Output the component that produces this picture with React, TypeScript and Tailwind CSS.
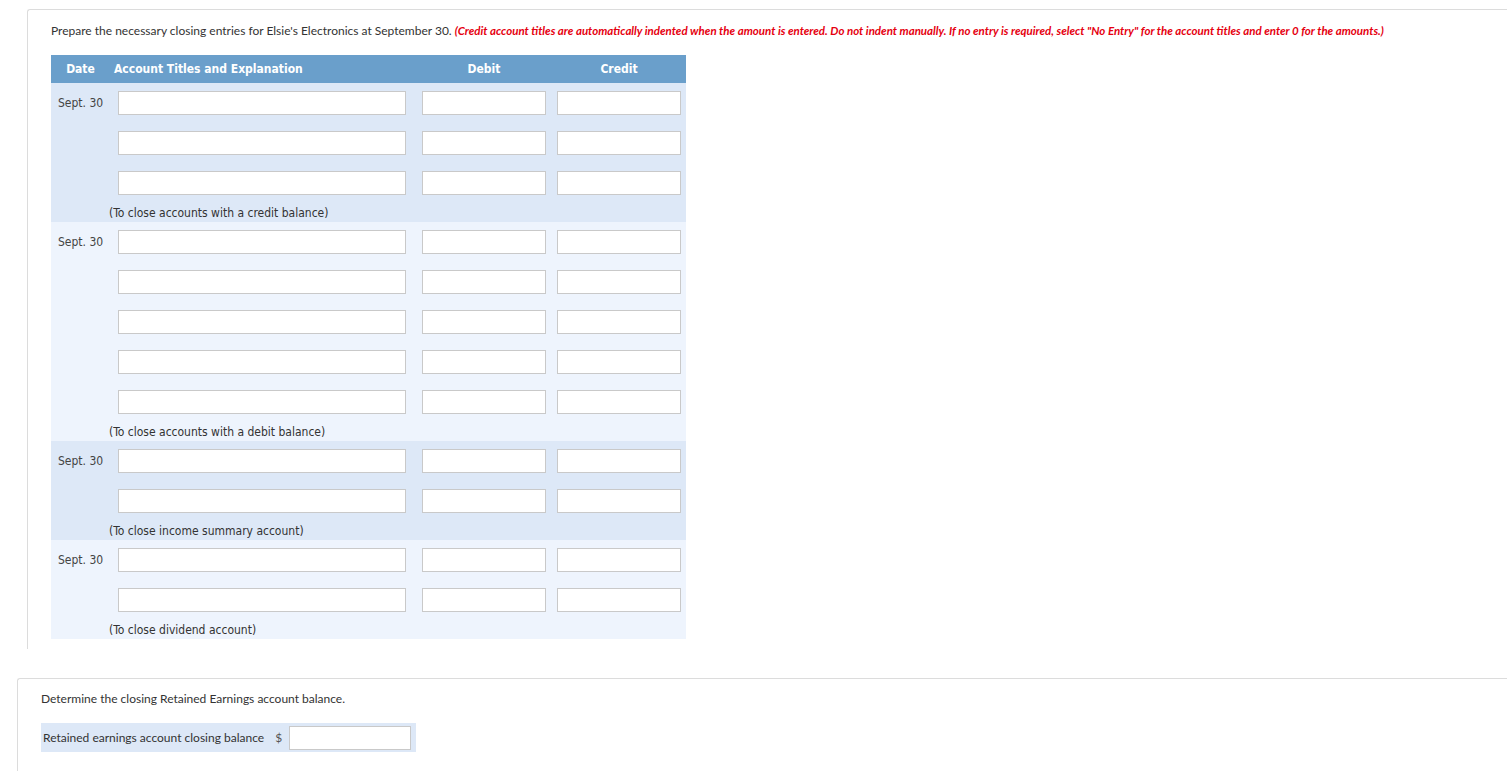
import React from 'react'

interface Entry {
  rows: number
  note: string
  tone: 'dark' | 'light'
}

const entries: Entry[] = [
  { rows: 3, note: '(To close accounts with a credit balance)', tone: 'dark' },
  { rows: 5, note: '(To close accounts with a debit balance)', tone: 'light' },
  { rows: 2, note: '(To close income summary account)', tone: 'dark' },
  { rows: 2, note: '(To close dividend account)', tone: 'light' },
]

const lato = { fontFamily: 'Lato, "Open Sans", sans-serif' }
const sans = { fontFamily: '"DejaVu Sans Condensed", "Liberation Sans", Arial, sans-serif' }

function Box({ className }: { className: string }) {
  return <div className={`shrink-0 h-6 bg-white border border-[#c9c9c9] ${className}`} />
}

function EntryBlock({ entry }: { entry: Entry }) {
  const bg = entry.tone === 'dark' ? 'bg-[#dde8f7]' : 'bg-[#eef4fd]'
  return (
    <div className={bg}>
      {Array.from({ length: entry.rows }).map((_, i) => (
        <div key={i} className="flex items-center h-10">
          <div className="shrink-0 w-[67px] pl-[7px] text-[12px] text-[#444]" style={sans}>
            {i === 0 ? 'Sept. 30' : ''}
          </div>
          <Box className="w-[288px]" />
          <Box className="w-[124px] ml-[16px]" />
          <Box className="w-[124px] ml-[11px]" />
        </div>
      ))}
      <div className="h-[19px] flex items-center pl-[58px] text-[12px] text-[#333]" style={sans}>
        {entry.note}
      </div>
    </div>
  )
}

export default function App() {
  return (
    <div className="w-[1507px] h-[771px] bg-white overflow-hidden pt-[9px]">
      <div className="ml-[27px] border-t border-l border-[#dcdcdc] rounded-tl-[3px] pl-[23px] pt-[14px] h-[640px]">
        <p className="text-[12px] text-[#333] leading-[14px] whitespace-nowrap" style={lato}>
          Prepare the necessary closing entries for Elsie's Electronics at September 30.{' '}
          <span className="text-[11.5px] text-[#e5000f] font-bold italic">
            (Credit account titles are automatically indented when the amount is entered. Do not indent manually. If no
            entry is required, select "No Entry" for the account titles and enter 0 for the amounts.)
          </span>
        </p>

        <div className="w-[635px] mt-[17px]">
          <div className="h-[28px] bg-[#6a9fcb] flex items-center text-white text-[12px] font-bold" style={sans}>
            <div className="shrink-0 w-[59px] text-center">Date</div>
            <div className="shrink-0 w-[312px] pl-[4px]">Account Titles and Explanation</div>
            <div className="shrink-0 w-[124px] text-center">Debit</div>
            <div className="shrink-0 w-[124px] ml-[11px] text-center">Credit</div>
          </div>
          {entries.map((e, i) => (
            <EntryBlock key={i} entry={e} />
          ))}
        </div>
      </div>

      <div className="ml-[17px] mt-[29px] border-t border-l border-[#dcdcdc] rounded-tl-[3px] pl-[23px] pt-[13px] h-[100px]">
        <p className="text-[12px] text-[#333] leading-[14px]" style={lato}>
          Determine the closing Retained Earnings account balance.
        </p>
        <div className="mt-[17px] w-[375px] h-[29px] bg-[#dde8f7] flex items-center pl-[2px]">
          <span className="text-[12px] text-[#333]" style={lato}>
            Retained earnings account closing balance
          </span>
          <span className="text-[12px] text-[#555] ml-[11px]" style={lato}>
            $
          </span>
          <div className="shrink-0 ml-[7px] w-[122px] h-[24px] bg-white border border-[#c9c9c9]" />
        </div>
      </div>
    </div>
  )
}
